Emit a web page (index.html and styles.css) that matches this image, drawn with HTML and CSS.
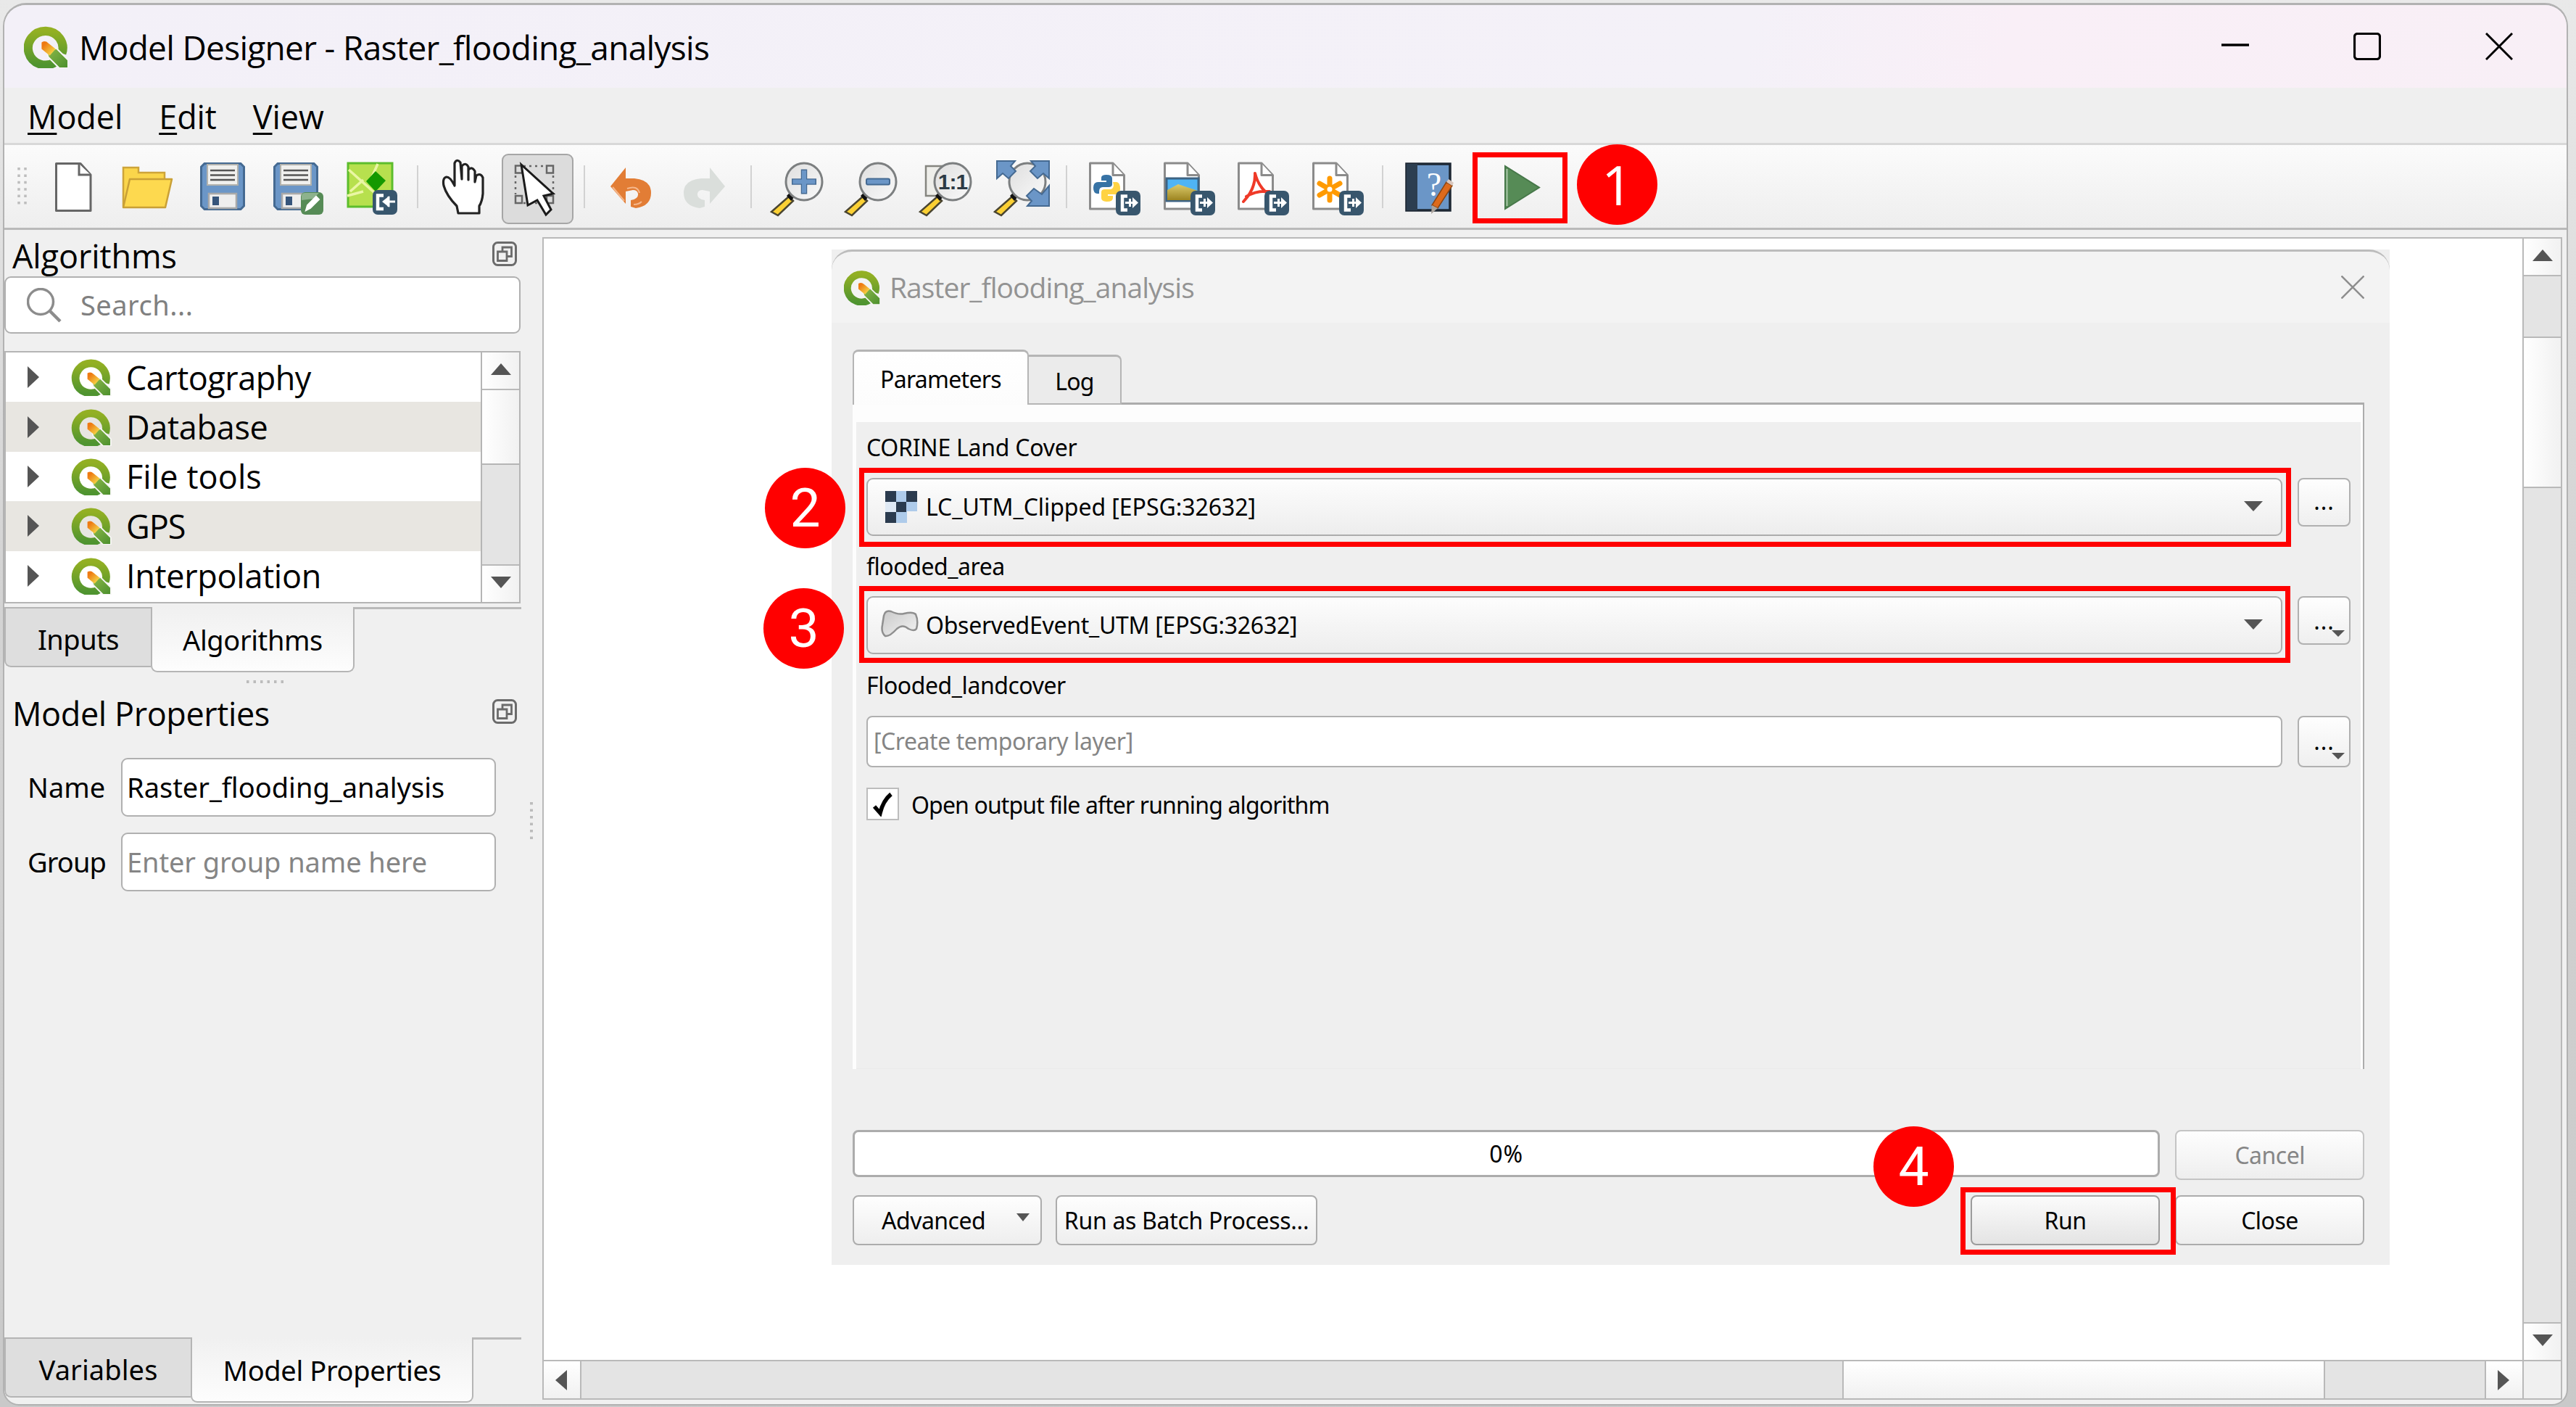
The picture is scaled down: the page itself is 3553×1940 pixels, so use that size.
FILE: index.html
```html
<!DOCTYPE html>
<html lang="en">
<head>
<meta charset="utf-8">
<title>Model Designer - Raster_flooding_analysis</title>
<link rel="stylesheet" href="styles.css">
</head>
<body>
<svg class="defs" aria-hidden="true">
  <defs>
    <linearGradient id="ringGreen" x1="0" y1="0" x2="0" y2="1"><stop offset="0" stop-color="#93b023"/><stop offset="1" stop-color="#4f9430"/></linearGradient>
    <linearGradient id="tailGreen" x1="0" y1="0" x2="1" y2="1"><stop offset="0" stop-color="#8cb84a"/><stop offset="1" stop-color="#4a8f2c"/></linearGradient>
    <linearGradient id="tip" x1="0" y1="0" x2="1" y2="1"><stop offset="0.2" stop-color="#ee7913"/><stop offset="0.9" stop-color="#f4e04d"/></linearGradient>
    <linearGradient id="lens" x1="0" y1="0" x2="1" y2="1"><stop offset="0" stop-color="#dedede"/><stop offset="1" stop-color="#fafafa"/></linearGradient>
    <linearGradient id="hill" x1="0" y1="0" x2="0" y2="1"><stop offset="0" stop-color="#dccb6c"/><stop offset="1" stop-color="#9c8420"/></linearGradient>
    <linearGradient id="poly" x1="0" y1="0" x2="1" y2="1"><stop offset="0" stop-color="#c9c9c9"/><stop offset="1" stop-color="#f4f4f4"/></linearGradient>
  </defs>
  <symbol id="qgis" viewBox="0 0 60 58">
    <path d="M42 50A23.500 23 0 1 1 51.500 38" fill="none" stroke="url(#ringGreen)" stroke-width="12"/>
    <path d="M31 36L44 31L60 47V58H48L33 43z" fill="url(#tailGreen)" stroke="#f6f6f4" stroke-width="2"/>
    <path d="M24 23q5-3 9 1l10 8-8 9-11-9z" fill="url(#tip)"/>
  </symbol>
  <symbol id="page" viewBox="0 0 50 66">
    <path d="M1.500 1.500H33L48.500 18V64.500H1.500z" fill="#fff" stroke="#8b8b8b" stroke-width="3" stroke-linejoin="round"/>
    <path d="M33 2V18H48" fill="#fff" stroke="#8b8b8b" stroke-width="3" stroke-linejoin="round"/>
  </symbol>
  <symbol id="export" viewBox="0 0 34 34">
    <rect width="34" height="34" rx="7" fill="#38566d"/>
    <path d="M16 7.500H9V26.500H16" fill="none" stroke="#fff" stroke-width="4.500"/>
    <path d="M13 16.500H26M19.500 11V22" stroke="#fff" stroke-width="3"/><path d="M23 9L31 16.500L23 24z" fill="#fff"/>
  </symbol>
  <symbol id="glass" viewBox="0 0 90 90">
    <path d="M33 59L39 65L18 85L9 80z" fill="#fbd034" stroke="#4a4530" stroke-width="2.500"/>
    <path d="M30 58l6-6 6 6-6 7z" fill="#111"/>
    <ellipse cx="54" cy="38.500" rx="25" ry="25.500" fill="url(#lens)" stroke="#7c7f80" stroke-width="3"/>
  </symbol>
  <symbol id="floppy" viewBox="0 0 62 66">
    <path d="M6 1.500H56L60.500 6V60L56 64.500H6L1.500 60V6z" fill="#6b96c7" stroke="#456a92" stroke-width="3"/>
    <path d="M10 3H52V31H10z" fill="#f0f0ee" stroke="#b2b2ac" stroke-width="2"/>
    <path d="M14 11H48M14 17.500H48M14 24H48" stroke="#555" stroke-width="2.500"/>
    <path d="M12 43H50V63H12z" fill="#eee" stroke="#a9a9a9" stroke-width="2.500"/>
    <path d="M17 47H26V59H17z" fill="#36557b"/>
  </symbol>
  <symbol id="float" viewBox="0 0 34 34">
    <rect x="1.500" y="1.500" width="31" height="31" rx="6" fill="none" stroke="#6b6b6b" stroke-width="3"/>
    <path d="M7.500 14H20V26.500H7.500z" fill="none" stroke="#6b6b6b" stroke-width="2.800"/>
    <path d="M14 13V8H26.500V20.500H21" fill="none" stroke="#6b6b6b" stroke-width="2.800"/>
  </symbol>
</svg>

<div class="window">
  <header class="titlebar">
    <svg class="app-logo"><use href="#qgis"/></svg>
    <h1 class="title">Model Designer - Raster_flooding_analysis</h1>
    <div class="win-buttons">
      <svg viewBox="0 0 38 38"><path d="M0 17H38" stroke="#000" stroke-width="3.500"/></svg>
      <svg viewBox="0 0 38 38"><rect x="1.500" y="1.500" width="35" height="35" rx="4" fill="none" stroke="#000" stroke-width="3.200"/></svg>
      <svg viewBox="0 0 38 38"><path d="M1 1L37 37M37 1L1 37" stroke="#000" stroke-width="3"/></svg>
    </div>
  </header>

  <nav class="menubar">
    <span class="menu"><u>M</u>odel</span>
    <span class="menu"><u>E</u>dit</span>
    <span class="menu"><u>V</u>iew</span>
  </nav>

  <div class="toolbar">
    <svg class="grip" viewBox="0 0 14 52"><path d="M3 0V52M12 0V52" stroke="#bdbdbd" stroke-width="3.500" stroke-dasharray="3.500 5.900"/></svg>
    <span class="tool"><svg viewBox="0 0 90 90">
      <path d="M21.500 13.500H55L69 29V78.500H21.500z" fill="#fff" stroke="#666" stroke-width="3" stroke-linejoin="round"/><path d="M53 14V29H69" fill="#fff" stroke="#666" stroke-width="3"/></svg></span>
    <span class="tool"><svg viewBox="0 0 90 90">
      <path d="M11 73V19H32V26H68V36H76" fill="#fad54b" stroke="#cda43a" stroke-width="2.500"/><path d="M20 35H78L69 74H11z" fill="#fdd94f" stroke="#c9a036" stroke-width="2.500" stroke-linejoin="round"/></svg></span>
    <span class="tool"><svg viewBox="0 0 90 90"><use href="#floppy" x="14" y="12" width="62" height="66"/></svg></span>
    <span class="tool"><svg viewBox="0 0 90 90"><use href="#floppy" x="13" y="12" width="62" height="66"/>
      <rect x="51" y="53" width="31" height="31" rx="6" fill="#568b56"/><path d="M52 64V58Q52 54 57 54H76L68 62z" fill="#8db28d"/><path d="M58 78L60 71L72 59L76 63L64 75z" fill="#fff" stroke="#fff" stroke-width="2"/></svg></span>
    <span class="tool"><svg viewBox="0 0 90 90">
      <path d="M13 13H74V73H13z" fill="#b7e04e" stroke="#5cbd2c" stroke-width="3"/><path d="M14 22L52 56M54 14L46 32M34 36L16 52M12 58L34 52" stroke="#eaf6a4" stroke-width="3.500" fill="none"/>
      <path d="M51 24L65 37L51 52L38 38z" fill="#149900"/>
      <rect x="47" y="50" width="34" height="34" rx="7" fill="#38566d"/><path d="M62 57.500H54V76H62" fill="none" stroke="#fff" stroke-width="4.500"/><path d="M64 66H78M69 59V73" stroke="#fff" stroke-width="3"/><path d="M70 58L60 66L70 74z" fill="#fff"/></svg></span>
    <i class="sep"></i>
    <span class="tool"><svg viewBox="0 0 90 90">
      <path d="M38 82L36 72Q22 58 18 44Q16 33 22 32Q27 32 33 44V13Q36 6 41 12L43 35V17Q48 11 52 18V36V22Q57 17 61 24V39L63 30Q69 26 72 33V55Q71 66 67 72V82z" fill="#fff" stroke="#222" stroke-width="3.200" stroke-linejoin="round"/></svg></span>
    <span class="tool tool-active"><svg viewBox="0 0 90 90">
      <g fill="none" stroke="#666" stroke-width="2.500"><path d="M26 17H58M26 68H58M15 30V56M67 30V56" stroke-dasharray="3 5"/><rect x="15" y="16.500" width="9" height="10"/><rect x="58" y="16.500" width="9" height="10"/><rect x="15" y="58" width="9" height="10"/><rect x="58" y="58" width="9" height="10"/></g>
      <path d="M23 15L67 55L54 58L64 77L57 84L45 64L32 71z" fill="#fff" stroke="#1a1a1a" stroke-width="3"/></svg></span>
    <i class="sep"></i>
    <span class="tool"><svg viewBox="0 0 90 90">
      <path d="M17 45L38 19V34H50Q73 36 73 54Q73 72 52 75L45 73V64Q56 62 55 55Q54 50 48 50L38 52V69z" fill="#e27d35"/><path d="M20 46L36 65M40 48Q54 43 57 54M49 70Q56 70 60 66" fill="none" stroke="#f5b78b" stroke-width="2"/></svg></span>
    <span class="tool"><svg viewBox="0 0 90 90">
      <path d="M73 45L52 19V34H40Q16 36 16 54Q16 72 38 75L45 73V64Q34 62 35 55Q36 50 42 50L52 52V69z" fill="#dadedb"/></svg></span>
    <i class="sep"></i>
    <span class="tool"><svg viewBox="0 0 90 90"><use href="#glass" width="90" height="90"/><path d="M37 38.500H71M54 21.500V55.500" stroke="#456a92" stroke-width="8.500"/><path d="M38.500 38.500H69.500M54 23V54" stroke="#6b96c7" stroke-width="6"/></svg></span>
    <span class="tool"><svg viewBox="0 0 90 90"><use href="#glass" width="90" height="90"/><rect x="38" y="34.500" width="32" height="8" rx="2" fill="#6b96c7" stroke="#456a92" stroke-width="2"/></svg></span>
    <span class="tool"><svg viewBox="0 0 90 90"><path d="M17 17H60V58H17z" fill="#eeeeea" stroke="#85857f" stroke-width="2.500"/><use href="#glass" width="90" height="90"/><text class="one-one" x="54" y="49" text-anchor="middle">1:1</text></svg></span>
    <span class="tool"><svg viewBox="0 0 90 90"><use href="#glass" width="90" height="90"/>
      <g fill="#6b96c7" stroke="#456a92" stroke-width="2"><path d="M12 10H37L31 17L38 24L28 34L20 27L12 34z"/><path d="M84 10H59L65 17L58 24L68 34L76 27L84 34z"/><path d="M84 72H54L60 65L53 58L63 48L74 56L84 44z"/></g></svg></span>
    <i class="sep"></i>
    <span class="tool"><svg viewBox="0 0 90 90"><use href="#page" x="12" y="11" width="50" height="67"/>
      <path d="M29 39V33Q29 29 36 29Q44 29 44 34V42Q44 46 39 46H31Q26 46 26 52V55H23Q18 54 18 47Q18 39 25 39H36V37H29z" fill="#3773a5"/><path d="M45 39H50Q55 40 55 48Q55 56 49 56H38V58H45V61Q45 66 37 66Q29 66 29 61V53Q29 49 34 49H42Q46 48 46 43z" fill="#ffd343"/>
      <use href="#export" x="49" y="51" width="34" height="34"/></svg></span>
    <span class="tool"><svg viewBox="0 0 90 90"><use href="#page" x="12" y="11" width="50" height="67"/>
      <path d="M16 34H60V65H16z" fill="#4fb4f5" stroke="#3d6383" stroke-width="3"/><path d="M17 50L32 42L59 51V64H17z" fill="url(#hill)"/>
      <use href="#export" x="49" y="51" width="34" height="34"/></svg></span>
    <span class="tool"><svg viewBox="0 0 90 90"><use href="#page" x="12" y="11" width="50" height="67"/>
      <path d="M36 27Q40 43 51 53M36 27Q37 48 20 66M24 59Q38 50 56 52" fill="none" stroke="#ef3a28" stroke-width="4" stroke-linecap="round"/>
      <use href="#export" x="49" y="51" width="34" height="34"/></svg></span>
    <span class="tool"><svg viewBox="0 0 90 90"><use href="#page" x="12" y="11" width="50" height="67"/>
      <path d="M36 34V64M22 41L50 57M50 41L22 57" stroke="#ff9a00" stroke-width="7" stroke-linecap="round"/><circle cx="36" cy="49" r="3.500" fill="#fff"/>
      <use href="#export" x="49" y="51" width="34" height="34"/></svg></span>
    <i class="sep"></i>
    <span class="tool"><svg viewBox="0 0 90 90">
      <path d="M15 14H75V78H15z" fill="#6b96c7" stroke="#1d2733" stroke-width="3.500"/><path d="M15 14H30V78H15z" fill="#2c3e50"/><text class="book-q" x="53" y="58" text-anchor="middle">?</text>
      <path d="M70 39L78 44L58 75L50 71z" fill="#dd6a1c" stroke="#8b4513" stroke-width="1.500"/><path d="M70 39L73 35L80 40L78 44z" fill="#d8c6bd"/><path d="M50 71L58 75L49 83z" fill="#aaa39c"/></svg></span>
    <i class="sep"></i>
    <span class="tool"><svg viewBox="0 0 90 90"><path d="M23 17L70 46.500L23 76z" fill="#568b56" stroke="#47784a" stroke-width="2"/><path d="M25.500 21V72" stroke="#a9c8a9" stroke-width="2"/></svg></span>
  </div>

  <main class="workspace">
    <aside class="dock">
      <div class="dock-head"><h2 class="dock-title">Algorithms</h2><svg class="float-btn"><use href="#float"/></svg></div>
      <div class="search">
        <svg class="search-icon" viewBox="0 0 48 48"><circle cx="19" cy="19" r="17.500" fill="none" stroke="#8c8c8c" stroke-width="3.500"/><path d="M31 31L46 46" stroke="#8c8c8c" stroke-width="4.500"/></svg>
        <span class="search-text">Search...</span>
      </div>
      <div class="tree">
        <ul class="tree-list">
          <li><b class="expander"></b><svg class="row-logo"><use href="#qgis"/></svg><span class="ls-carto">Cartography</span></li>
          <li><b class="expander"></b><svg class="row-logo"><use href="#qgis"/></svg><span>Database</span></li>
          <li><b class="expander"></b><svg class="row-logo"><use href="#qgis"/></svg><span class="ls-file">File tools</span></li>
          <li><b class="expander"></b><svg class="row-logo"><use href="#qgis"/></svg><span class="ls-gps">GPS</span></li>
          <li><b class="expander"></b><svg class="row-logo"><use href="#qgis"/></svg><span>Interpolation</span></li>
        </ul>
        <div class="tree-scroll"><i class="sb-btn"><b class="up"></b></i><i class="tree-thumb"></i><i class="trough"></i><i class="sb-btn"><b class="down"></b></i></div>
      </div>
      <div class="tabs-south tabs-top">
        <span class="stab stab-inputs">Inputs</span><span class="stab stab-on stab-algs">Algorithms</span><i class="stab-rest"></i>
      </div>
      <div class="split-h"><svg viewBox="0 0 52 4"><path d="M0 2H52" stroke="#bcbcbc" stroke-width="4" stroke-dasharray="3.500 6"/></svg></div>
      <div class="dock-head dock-head-props"><h2 class="dock-title ls-props">Model Properties</h2><svg class="float-btn"><use href="#float"/></svg></div>
      <div class="form">
        <label class="form-label">Name</label><div class="field">Raster_flooding_analysis</div>
        <label class="form-label ls-group">Group</label><div class="field placeholder">Enter group name here</div>
      </div>
      <svg class="split-v" viewBox="0 0 4 52"><path d="M2 0V52" stroke="#bcbcbc" stroke-width="4" stroke-dasharray="3.500 6"/></svg>
      <div class="tabs-south tabs-bottom">
        <span class="stab stab-vars">Variables</span><span class="stab stab-on stab-props">Model Properties</span><i class="stab-rest"></i>
      </div>
    </aside>

    <section class="view">
      <div class="canvas">
        <div class="dialog">
          <div class="dialog-title"><svg class="dialog-logo"><use href="#qgis"/></svg><span class="dialog-name">Raster_flooding_analysis</span>
            <svg class="dialog-close" viewBox="0 0 32 32"><path d="M0.500 0.500L31.500 31.500M31.500 0.500L0.500 31.500" stroke="#8e8e8e" stroke-width="2.500"/></svg></div>
          <div class="dialog-body">
            <div class="tabs-north"><span class="ntab ntab-on">Parameters</span><span class="ntab">Log</span><i class="ntab-rest"></i></div>
            <div class="pane"><div class="pane-inner">
              <div class="label label-1">CORINE Land Cover</div>
              <div class="row">
                <div class="combo"><svg class="raster" viewBox="0 0 44 44"><path d="M0 0H44V28H30V44H0z" fill="#aecbea"/><path d="M0 0H15V15H0zM29 0H44V15H29zM15 15H29V29H15zM0 29H15V44H0z" fill="#2b3b4e"/><path d="M0 15H15V29H0z" fill="#dfe9f4"/></svg><span class="combo-text">LC_UTM_Clipped [EPSG:32632]</span><b class="down combo-arrow"></b></div>
                <div class="more">...</div>
              </div>
              <div class="label label-2">flooded_area</div>
              <div class="row">
                <div class="combo combo-2"><svg class="polygon" viewBox="0 0 52 40"><path d="M4 9Q6 1 14 3Q24 8 32 6Q44 3 48 7Q52 16 49 27Q46 31 38 27Q30 20 22 27Q12 38 6 37Q0 32 2 22z" fill="url(#poly)" stroke="#8f8f8f" stroke-width="2.500"/></svg><span class="combo-text ls-event">ObservedEvent_UTM [EPSG:32632]</span><b class="down combo-arrow"></b></div>
                <div class="more more-2">...<b class="down mini"></b></div>
              </div>
              <div class="label label-3">Flooded_landcover</div>
              <div class="row">
                <div class="line-edit">[Create temporary layer]</div>
                <div class="more more-3">...<b class="down mini"></b></div>
              </div>
              <div class="check-row"><span class="check"><svg viewBox="0 0 30 34"><path d="M3 20L11 29Q15 12 26 3" fill="none" stroke="#000" stroke-width="5.500"/></svg></span><span class="check-text">Open output file after running algorithm</span></div>
            </div></div>
            <div class="actions actions-1"><div class="progress">0%</div><div class="btn btn-off">Cancel</div></div>
            <div class="actions actions-2"><div class="btn btn-adv">Advanced<b class="down adv-arrow"></b></div><div class="btn btn-batch">Run as Batch Process...</div><div class="btn btn-run">Run</div><div class="btn">Close</div></div>
          </div>
        </div>
      </div>
      <div class="vbar"><i class="sb-btn"><b class="up"></b></i><i class="trough vgap"></i><i class="vthumb"></i><i class="trough"></i><i class="sb-btn"><b class="down"></b></i></div>
      <div class="hbar"><i class="hb-btn"><b class="left"></b></i><i class="trough"></i><i class="hthumb"></i><i class="trough hgap"></i><i class="hb-btn"><b class="right"></b></i></div>
      <div class="corner"></div>
    </section>
  </main>
</div>

<div class="mark mark-play"></div>
<div class="mark mark-land"></div>
<div class="mark mark-flood"></div>
<div class="mark mark-run"></div>
<div class="step step-1">1</div>
<div class="step step-2">2</div>
<div class="step step-3">3</div>
<div class="step step-4">4</div>
</body>
</html>
```

FILE: styles.css
```css
* { box-sizing: border-box; }
body {
  margin: 0;
  width: 3553px;
  height: 1940px;
  overflow: hidden;
  position: relative;
  padding: 4px 11px 2px 4px;
  background: linear-gradient(#e9e9e9, #d4d4d4 40%, #c9c9c9);
  font-family: "Noto Sans", "Open Sans", sans-serif;
  font-size: 38px;
  color: #000;
}
h1, h2, ul { margin: 0; padding: 0; font-weight: 400; }
i, b { display: block; }
.defs { position: absolute; width: 0; height: 0; }

.window {
  display: flex;
  flex-direction: column;
  height: 1934px;
  border: 2px solid #b2b2b2;
  border-top-width: 3px;
  border-radius: 32px 32px 22px 22px;
  background: #f0f0f0;
  overflow: hidden;
}

/* title bar */
.titlebar {
  display: flex;
  align-items: center;
  height: 114px;
  padding: 0 74px 0 26px;
  background: linear-gradient(100deg, #f3f0f8 0%, #f4f1f8 68%, #f9eff7 78%, #f8eff6 100%);
}
.app-logo { width: 61px; height: 59px; margin: 0 15px 0 1px; }
.title { font: 46px/60px "Open Sans", sans-serif; letter-spacing: -0.7px; padding-top: 1px; }
.win-buttons { margin-left: auto; display: flex; gap: 144px; }
.win-buttons svg { width: 38px; height: 38px; }

/* menus */
.menubar {
  display: flex;
  gap: 50px;
  height: 79px;
  padding: 8px 0 0 32px;
  background: #efefef;
  border-bottom: 3px solid #d8d8d8;
  font: 45px/64px "Open Sans", sans-serif;
}
.menu { letter-spacing: -0.1px; }
.menu u { text-decoration-thickness: 3px; text-underline-offset: 5px; }

/* toolbar */
.toolbar {
  display: flex;
  align-items: center;
  height: 117px;
  padding-left: 17px;
  background: linear-gradient(#fbfbfb, #eeeeee);
  border-bottom: 3px solid #b9b9b9;
}
.grip { width: 14px; height: 52px; margin-right: 13px; }
.tool { flex: none; width: 102.700px; display: flex; justify-content: center; align-items: center; }
.tool svg { width: 90px; height: 90px; }
.tool-active { width: 99px; height: 97px; margin: 6px 3px 0 1px; border: 2.500px solid #a6a6a6; border-radius: 9px; background: #dcdcdc; }
.tool-active svg { margin-top: -6px; }
.sep { flex: none; width: 2px; height: 59px; margin: 0 11.300px; background: #d2d2d2; }
.one-one { font: 700 30px "Liberation Sans", sans-serif; letter-spacing: -1px; fill: #2d3a45; }
.book-q { font: 46px "Liberation Serif", serif; fill: #fff; }

/* workspace */
.workspace { flex: 1; display: flex; min-height: 0; }
.dock { position: relative; width: 742px; flex: none; display: flex; flex-direction: column; }
.dock-head { display: flex; justify-content: space-between; height: 64px; padding: 7px 35px 0 11px; width: 742px; }
.dock-title { font: 45px/57px "Open Sans", sans-serif; letter-spacing: -0.1px; }
.float-btn { width: 34px; height: 34px; margin-top: 9px; }
.search {
  display: flex;
  align-items: center;
  width: 712px;
  height: 79px;
  padding-left: 29px;
  gap: 26px;
  background: #fff;
  border: 2.500px solid #b0b0b0;
  border-radius: 9px;
  color: #808080;
}
.search-icon { width: 48px; height: 48px; }
.search-text { letter-spacing: 0.5px; margin-top: -1px; }

.tree { display: flex; width: 712px; height: 348px; margin-top: 24px; border: 2px solid #b5b5b5; background: #fff; }
.tree-list { flex: 1; list-style: none; overflow: hidden; font: 45px/64px "Open Sans", sans-serif; letter-spacing: -0.3px; }
.tree-list li { display: flex; align-items: center; height: 68.400px; padding-left: 30px; }
.tree-list li:nth-child(even) { background: #e8e6e1; }
.tree-list span { padding-top: 1px; }
.expander { width: 0; height: 0; border: 15px solid transparent; border-left: 16px solid #555; border-right: 0; margin-right: 44px; }
.row-logo { width: 56px; height: 52px; margin-right: 20px; }
.tree-list .ls-carto { letter-spacing: -0.5px; }
.tree-list .ls-file { letter-spacing: 0.1px; }
.tree-list .ls-gps { letter-spacing: -1px; }
.tree-scroll { width: 53px; border-left: 2px solid #b5b5b5; display: flex; flex-direction: column; }
.tree-thumb { height: 103px; background: linear-gradient(90deg, #fff, #f1f1f1); border-bottom: 2px solid #b5b5b5; }
.trough { flex: 1; background: #e4e4e4; }
.sb-btn { flex: none; height: 52px; display: flex; align-items: center; justify-content: center; background: linear-gradient(90deg, #fff, #f1f1f1); border-bottom: 2px solid #b9b9b9; }
.trough + .sb-btn { border-bottom: 0; border-top: 2px solid #b9b9b9; }
.up, .down, .left, .right { width: 0; height: 0; border: 14px solid transparent; }
.up { border-top: 0; border-bottom: 16px solid #555; }
.down { border-bottom: 0; border-top: 16px solid #555; }
.left { border-left: 0; border-right: 16px solid #555; }
.right { border-right: 0; border-left: 16px solid #555; }
.sb-btn b { margin-top: -4px; }

/* tabs below a panel */
.tabs-south { display: flex; align-items: flex-start; width: 713px; height: 90px; }
.tabs-top { margin-top: 5px; }
.tabs-bottom { margin-top: auto; margin-bottom: 2px; }
.stab { height: 83px; line-height: 84px; text-align: center; background: #dedede; border: 2.500px solid #b5b5b5; border-right: 0; border-radius: 0 0 0 9px; }
.stab-on { height: 90px; line-height: 90px; background: linear-gradient(#f0f0f0, #fdfdfd); border-right: 2.500px solid #b5b5b5; border-top: 0; border-radius: 0 0 9px 9px; }
.stab-inputs { width: 202px; letter-spacing: -0.5px; }
.stab-algs { width: 281px; letter-spacing: -0.4px; }
.stab-vars { width: 257px; letter-spacing: 0.1px; }
.stab-props { width: 390px; letter-spacing: -0.35px; }
.stab-rest { flex: 1; border-top: 3px solid #b9b9b9; }
.split-h { height: 28px; padding: 11px 0 0 334px; }
.split-h svg { display: block; width: 52px; height: 4px; }
.dock-head-props { height: 90px; padding-top: 0; }
.ls-props { letter-spacing: -0.4px; }
.form { display: grid; grid-template-columns: 129px 517px; row-gap: 22px; padding-left: 32px; align-items: center; }
.form-label { margin-top: -2px; }
.field { height: 81px; line-height: 76px; padding-left: 6px; background: #fff; border: 2.500px solid #b0b0b0; border-radius: 9px; }
.placeholder { color: #858585; letter-spacing: -0.1px; }
.ls-group { letter-spacing: -0.9px; }
.split-v { position: absolute; left: 725px; top: 789px; width: 4px; height: 52px; }

/* graphics view */
.view { flex: none; width: 2786px; height: 1603px; margin-top: 10px; display: grid; grid-template: 1fr 53px / 1fr 53px; border: 2px solid #b9b9b9; background: #fff; }
.canvas { position: relative; }
.vbar { display: flex; flex-direction: column; border-left: 2px solid #b9b9b9; }
.vgap { flex: none; height: 83px; }
.vthumb { flex: none; height: 209px; background: linear-gradient(90deg, #fff, #f1f1f1); border: solid #b9b9b9; border-width: 2px 0; }
.hbar { display: flex; border-top: 2px solid #b9b9b9; }
.hb-btn { flex: none; width: 52px; display: flex; align-items: center; justify-content: center; background: linear-gradient(#fff, #f1f1f1); border-right: 2px solid #b9b9b9; }
.hb-btn b { margin-left: -3px; }
.trough + .hb-btn { border-right: 0; border-left: 2px solid #b9b9b9; }
.hthumb { flex: none; width: 666px; background: linear-gradient(#fff, #f1f1f1); border: solid #b9b9b9; border-width: 0 2px; }
.hgap { flex: none; width: 220px; }
.corner { background: #f0f0f0; border: solid #b9b9b9; border-width: 2px 0 0 2px; }

/* dialog */
.dialog { position: absolute; left: 397px; top: 15px; width: 2149px; height: 1400px; background: #efefef; font-size: 32px; }
.dialog-title { display: flex; align-items: center; height: 101px; padding: 0 35px 0 17px; background: #f3f3f3; border-top: 3px solid #bcbcbc; border-radius: 28px 28px 0 0; color: #939393; }
.dialog-logo { width: 50px; height: 50px; margin-right: 13px; }
.dialog-name { font: 39px/50px "Open Sans", sans-serif; letter-spacing: -0.95px; }
.dialog-close { width: 32px; height: 32px; margin-left: auto; }
.dialog-body { padding: 37px 35px 0 29px; }
.tabs-north { display: flex; align-items: flex-end; height: 76px; }
.ntab { width: 128px; height: 69px; line-height: 63px; text-align: center; background: #ebebeb; border: solid #b5b5b5; border-width: 3px 2px 2px 0; border-radius: 0 8px 0 0; padding-top: 2px; letter-spacing: -0.7px; }
.ntab-on { width: 243px; height: 76px; line-height: 76px; background: linear-gradient(#fff, #fcfcfc); border-width: 3px 2px 0 2px; border-radius: 8px 8px 0 0; padding-top: 0; }
.ntab-rest { flex: 1; height: 3px; background: #acacac; }
.pane { height: 916px; padding: 24px 3px 0 5px; background: #fdfdfd; border-right: 2px solid #acacac; }
.pane-inner { height: 892px; padding-left: 14px; background: #efefef; border-bottom: 1px solid #eaeaea; }
.label { letter-spacing: -0.45px; }
.label-1 { height: 77px; line-height: 70px; letter-spacing: -0.25px; }
.label-2 { height: 83px; line-height: 84px; }
.label-3 { height: 85px; line-height: 86px; }
.row { display: flex; gap: 21px; align-items: flex-start; }
.combo { width: 1953px; height: 80px; display: flex; align-items: center; padding: 0 25px 0 24px; background: linear-gradient(#fdfdfd, #ededed); border: 2.500px solid #acacac; border-radius: 9px; }
.combo-2 { padding-left: 18px; }
.combo-text { margin-top: -1px; letter-spacing: -0.05px; }
.raster { width: 44px; height: 44px; margin-right: 12px; }
.polygon { width: 52px; height: 40px; margin: -5px 10px 0 0; }
.combo-text.ls-event { letter-spacing: -0.28px; }
.combo-arrow { margin-left: auto; border-width: 14px 13px 0; margin-top: -3px; }
.more { position: relative; width: 73px; height: 67px; line-height: 60px; text-align: center; background: linear-gradient(#fefefe, #efefef); border: 2.500px solid #b0b0b0; border-radius: 8px; letter-spacing: 1px; }
.more-2 { line-height: 64px; }
.more-3 { height: 71px; line-height: 66px; }
.mini { position: absolute; right: 6px; bottom: 9px; border-width: 9px 9px 0; }
.line-edit { width: 1953px; height: 71px; line-height: 66px; padding-left: 8px; background: #fff; border: 2.500px solid #b0b0b0; border-radius: 8px; color: #858585; letter-spacing: -0.45px; }
.check-row { display: flex; align-items: center; margin-top: 28px; gap: 17px; }
.check { width: 45px; height: 45px; display: flex; align-items: center; justify-content: center; background: #fff; border: 2.500px solid #bdbdbd; }
.check svg { width: 30px; height: 34px; }
.check-text { letter-spacing: -0.87px; padding-top: 2px; line-height: 41px; }

.actions { display: flex; align-items: flex-start; }
.actions-1 { margin-top: 84px; gap: 21px; height: 69px; }
.actions-2 { margin-top: 21px; }
.progress { width: 1806px; height: 65px; line-height: 60px; text-align: center; background: #fff; border: 3px solid #acacac; border-radius: 8px; letter-spacing: 1px; }
.btn { width: 261px; height: 69px; line-height: 65px; text-align: center; background: linear-gradient(#fefefe, #eeeeee); border: 2.500px solid #acacac; border-radius: 8px; letter-spacing: -0.5px; }
.btn-off { color: #868686; border-color: #c4c4c4; }
.btn-adv { display: flex; align-items: flex-start; padding-left: 38px; }
.adv-arrow { border-width: 11px 9px 0; margin: 23px 0 0 43px; }
.btn-batch { width: 361px; margin-left: 19px; letter-spacing: -0.3px; }
.btn-run { margin: 0 21px 0 auto; background: linear-gradient(#fbfbfb, #e4e4e4); border-color: #9c9c9c; }

/* callouts */
.mark { position: absolute; border: 7px solid #f00; }
.mark-play { left: 2031px; top: 210px; width: 131px; height: 98px; }
.mark-land { left: 1185px; top: 645px; width: 1975px; height: 109px; }
.mark-flood { left: 1185px; top: 808px; width: 1974px; height: 106px; }
.mark-run { left: 2704px; top: 1637px; width: 297px; height: 93px; }
.step { position: absolute; width: 111px; height: 111px; border-radius: 50%; background: #f00; color: #fff; text-align: center; font: 75px/111px Roboto, "Liberation Sans", sans-serif; }
.step-1 { left: 2175px; top: 199px; font-family: "Open Sans", sans-serif; }
.step-2 { left: 1055px; top: 645px; }
.step-3 { left: 1053px; top: 811px; }
.step-4 { left: 2584px; top: 1553px; }
```
